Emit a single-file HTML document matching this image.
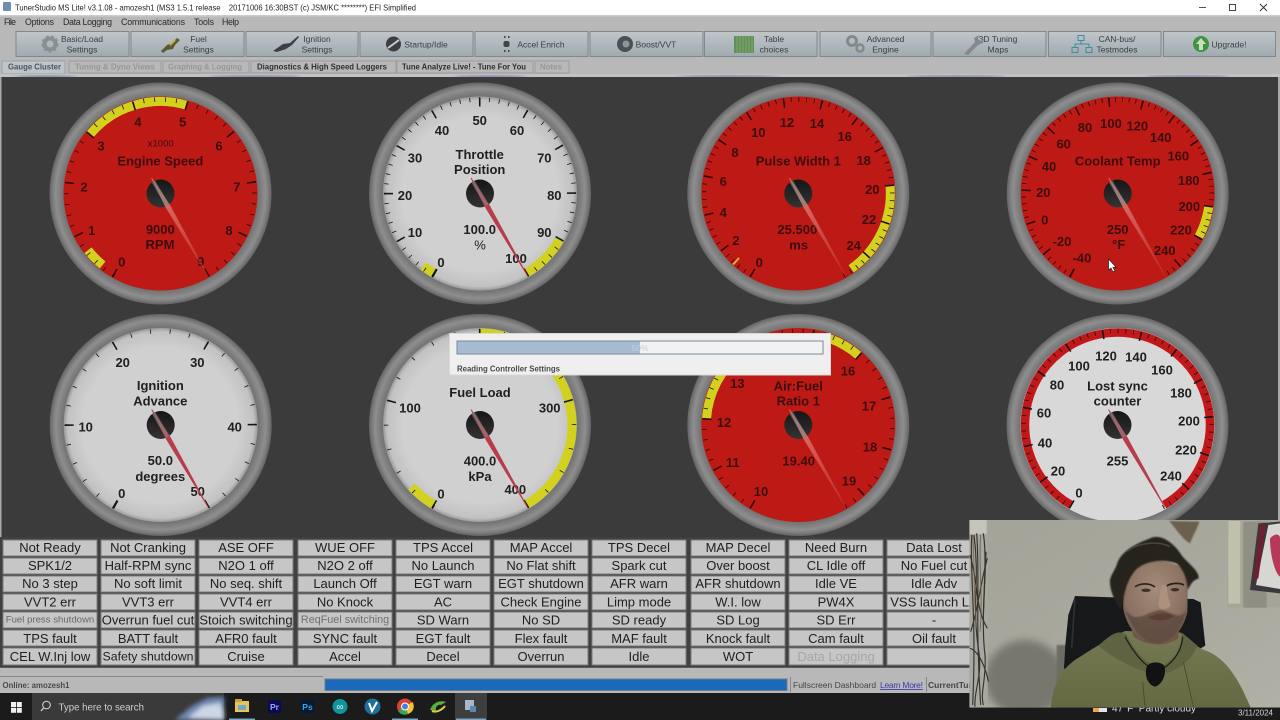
<!DOCTYPE html>
<html><head><meta charset="utf-8"><title>TunerStudio</title>
<style>
html,body{margin:0;padding:0;width:1280px;height:720px;overflow:hidden;background:#3b3b3b}
svg{display:block;font-family:"Liberation Sans",sans-serif}
#root{filter:blur(.35px)}
text{white-space:pre}
.g text{text-anchor:middle;dominant-baseline:central;font-weight:bold;font-size:13px}
.gw text{fill:#202020}.gr text{fill:#3d0d0e}
.A{fill:none;stroke:#d2d21e;stroke-width:9}
.M{fill:none;stroke-width:9}.m{fill:none;stroke-width:4.5}
.gw .M,.gw .m{stroke:#151515}.gr .M,.gr .m{stroke:#2c0808}
.tb text{text-anchor:middle;font-size:8.5px;fill:#3a4045;dominant-baseline:central}
.mn text{font-size:8.8px;fill:#2a2a2a;dominant-baseline:central}
.tab text{font-size:8.4px;font-weight:bold;dominant-baseline:central}
.ct text{text-anchor:middle;dominant-baseline:central;font-size:13px;fill:#202020}
</style></head><body>
<svg id="root" width="1280" height="720" viewBox="0 0 1280 720" xmlns="http://www.w3.org/2000/svg">
<defs>
<radialGradient id="bz" gradientUnits="userSpaceOnUse" cx="0" cy="0" r="111">
<stop offset=".86" stop-color="#6c6c6c"/><stop offset=".9" stop-color="#7c7c7c"/><stop offset=".945" stop-color="#8e8e8e"/><stop offset=".97" stop-color="#7e7e7e"/><stop offset="1" stop-color="#636363"/>
</radialGradient>
<radialGradient id="fw" gradientUnits="userSpaceOnUse" cx="0" cy="0" r="97">
<stop offset=".8" stop-color="#d0d0d0"/><stop offset=".96" stop-color="#c2c2c2"/><stop offset="1" stop-color="#9a9a9a"/>
</radialGradient>
<linearGradient id="hb" x1="0" y1="0" x2="0" y2="1"><stop offset="0" stop-color="#161616"/><stop offset="1" stop-color="#333"/></linearGradient>
<linearGradient id="nd" gradientUnits="userSpaceOnUse" x1="0" y1="0" x2="47" y2="82"><stop offset=".1" stop-color="#e08078" stop-opacity=".8"/><stop offset="1" stop-color="#d86a62" stop-opacity=".2"/></linearGradient>
<clipPath id="sw"><polygon points="0,0 -66,120 -130,120 -130,-130 130,-130 130,120 66,120"/></clipPath>
<g id="bez"><circle r="111" fill="url(#bz)"/></g>
<g id="hubw"><circle r="14" fill="url(#hb)"/><polygon points="-8.65,-15.8 9.67,11.75 47.85,82.1 47.15,82.5 5.33,14.25 -9.35,-15.4" fill="#b93c4a"/><line x1="-7" y1="-12" x2="7" y2="12" stroke="#888" stroke-width="4" opacity=".55"/></g>
<g id="hubr"><circle r="14" fill="url(#hb)"/><polygon points="-8.65,-15.8 9.67,11.75 47.85,82.1 47.15,82.5 5.33,14.25 -9.35,-15.4" fill="url(#nd)"/><line x1="-7" y1="-12" x2="7" y2="12" stroke="#888" stroke-width="4" opacity=".55"/></g>
<g id="row"><rect x="0" y="540" width="94" height="16"/><rect x="0" y="558" width="94" height="16"/><rect x="0" y="576" width="94" height="16"/><rect x="0" y="594" width="94" height="16"/><rect x="0" y="612" width="94" height="16"/><rect x="0" y="630" width="94" height="16"/><rect x="0" y="648" width="94" height="17"/></g>
<linearGradient id="btn" x1="0" y1="0" x2="0" y2="1"><stop offset="0" stop-color="#c0c6c9"/><stop offset="1" stop-color="#9faab0"/></linearGradient>
<filter id="bl"><feGaussianBlur stdDeviation="2"/></filter>
<filter id="bl6"><feGaussianBlur stdDeviation="12"/></filter>
</defs>

<rect width="1280" height="720" fill="#3b3b3b"/>
<!-- title bar -->
<rect width="1280" height="15" fill="#fff"/>
<rect x="3" y="2" width="8" height="9" rx="1" fill="#6f8fb0"/>
<text x="15" y="10.5" font-size="8.6" fill="#222" textLength="401" lengthAdjust="spacingAndGlyphs">TunerStudio MS Lite! v3.1.08 - amozesh1 (MS3 1.5.1 release    20171006 16:30BST (c) JSM/KC ********) EFI Simplified</text>
<line x1="1199" y1="7.5" x2="1206" y2="7.5" stroke="#555"/>
<rect x="1229.5" y="4.5" width="6" height="6" fill="none" stroke="#444"/>
<path d="M1260 4L1267 11M1267 4L1260 11" stroke="#333" fill="none"/>
<!-- menu + toolbar -->
<rect y="15" width="1280" height="60" fill="#b8b8b8"/>
<rect y="15" width="1280" height="1.5" fill="#cccccc"/>
<g class="mn">
<text x="4" y="22" textLength="12">File</text><text x="25" y="22" textLength="29">Options</text><text x="63" y="22" textLength="49">Data Logging</text><text x="121" y="22" textLength="64">Communications</text><text x="194" y="22" textLength="20">Tools</text><text x="222" y="22" textLength="17">Help</text>
</g>
<g fill="url(#btn)" stroke="#7d8990">
<rect x="16" y="31.5" width="113" height="25"/><rect x="131" y="31.5" width="113" height="25"/><rect x="246" y="31.5" width="112" height="25"/><rect x="360" y="31.5" width="113" height="25"/><rect x="475" y="31.5" width="113" height="25"/><rect x="590" y="31.5" width="113" height="25"/><rect x="704.500" y="31.5" width="112.500" height="25"/><rect x="820" y="31.5" width="111" height="25"/><rect x="933" y="31.5" width="113" height="25"/><rect x="1048.500" y="31.5" width="112.500" height="25"/><rect x="1163.500" y="31.5" width="112" height="25"/>
</g>
<g class="tb">
<text x="82" y="39">Basic/Load</text><text x="82" y="49.500">Settings</text>
<text x="198.500" y="39">Fuel</text><text x="198.500" y="49.500">Settings</text>
<text x="317" y="39">Ignition</text><text x="317" y="49.500">Settings</text>
<text x="426" y="44.500">Startup/Idle</text>
<text x="541" y="44.500">Accel Enrich</text>
<text x="656" y="44.500">Boost/VVT</text>
<text x="774" y="39">Table</text><text x="774" y="49.500">choices</text>
<text x="885.500" y="39">Advanced</text><text x="885.500" y="49.500">Engine</text>
<text x="998" y="39">3D Tuning</text><text x="998" y="49.500">Maps</text>
<text x="1117" y="39">CAN-bus/</text><text x="1117" y="49.500">Testmodes</text>
<text x="1229" y="44.500">Upgrade!</text>
</g>
<!-- toolbar icons -->
<circle cx="50" cy="44" r="5.500" fill="none" stroke="#8a8e90" stroke-width="4"/><circle cx="50" cy="44" r="8" fill="none" stroke="#8f9395" stroke-width="1.500" stroke-dasharray="3 2.500"/>
<path d="M161 51L167 45L172 43L177 38L180 40L175 45L173 49L167 50L163 53Z" fill="#5d5a30"/><path d="M170 45L175 40" stroke="#c7b050" stroke-width="2"/>
<path d="M273 51L283 44L290 43L298 36L299 37L292 45L286 49L277 52Z" fill="#3c4044"/>
<circle cx="393.500" cy="44" r="7.500" fill="#3b3f42"/><path d="M388 48L399 40" stroke="#ccc" stroke-width="2"/>
<g fill="#444"><rect x="504" y="36" width="1.500" height="2"/><rect x="508" y="36" width="1.500" height="2"/><rect x="503.500" y="41" width="6" height="6" rx="2"/><rect x="504" y="50" width="1.500" height="2"/><rect x="508" y="50" width="1.500" height="2"/></g>
<circle cx="625" cy="44" r="8" fill="#4a5054"/><circle cx="626" cy="44" r="3.500" fill="#8f979b"/>
<rect x="734" y="36" width="20" height="17" fill="#5f9060"/><path d="M737 36V53M740 36V53M743 36V53M746 36V53M749 36V53M752 36V53" stroke="#84a85a" stroke-width="1"/>
<circle cx="852" cy="41" r="4.500" fill="none" stroke="#85898b" stroke-width="3"/><circle cx="860" cy="48" r="3.500" fill="none" stroke="#85898b" stroke-width="2.500"/>
<path d="M964 54L975 42L974 38L979 35L978 39L981 41L984 38L983 43L978 45L968 55Z" fill="#85898c"/>
<g fill="none" stroke="#3d8ba0"><rect x="1078" y="35.500" width="6" height="5"/><rect x="1072" y="47.500" width="6" height="5"/><rect x="1086" y="47.500" width="6" height="5"/><path d="M1081 40.500V44M1075 47.500V44H1089V47.500"/></g>
<circle cx="1201" cy="44" r="8" fill="#3e9440"/><path d="M1201 38L1206 44H1203V50H1199V44H1196Z" fill="#cfdcc0"/>
<!-- tabs -->
<rect x="2" y="61" width="63" height="13" fill="#bec6ca" stroke="#9aa2a6"/>
<g fill="#b8b8b8" stroke="#9c9c9c"><rect x="69" y="61" width="92" height="12"/><rect x="163" y="61" width="86" height="12"/><rect x="251" y="61" width="145" height="12"/><rect x="397" y="61" width="136" height="12"/><rect x="535" y="61" width="34" height="12"/></g>
<g class="tab">
<text x="8" y="66.500" fill="#47545e" textLength="53" lengthAdjust="spacingAndGlyphs">Gauge Cluster</text>
<text x="75" y="66.500" fill="#979797" textLength="80" lengthAdjust="spacingAndGlyphs">Tuning &amp; Dyno Views</text>
<text x="168" y="66.500" fill="#979797" textLength="74" lengthAdjust="spacingAndGlyphs">Graphing &amp; Logging</text>
<text x="257" y="66.500" fill="#2e2e2e" textLength="130" lengthAdjust="spacingAndGlyphs">Diagnostics &amp; High Speed Loggers</text>
<text x="402" y="66.500" fill="#2e2e2e" textLength="124" lengthAdjust="spacingAndGlyphs">Tune Analyze Live! - Tune For You</text>
<text x="540" y="66.500" fill="#979797" textLength="22" lengthAdjust="spacingAndGlyphs">Notes</text>
</g>
<rect y="74" width="1280" height="3.500" fill="#bfc3c6"/>
<g fill="#3c3c90" opacity=".75" filter="url(#bl)"><ellipse cx="46" cy="76.500" rx="30" ry="1.200"/><ellipse cx="255" cy="76.500" rx="45" ry="1.200"/><ellipse cx="490" cy="76.500" rx="35" ry="1.200"/><ellipse cx="728" cy="76.500" rx="50" ry="1.200"/><ellipse cx="956" cy="76.500" rx="48" ry="1.200"/><ellipse cx="1187" cy="76.500" rx="42" ry="1.200"/></g>
<rect y="77" width="1280" height="461" fill="#3b3b3b"/>
<rect y="77" width="1.500" height="461" fill="#a8a8a8"/><rect x="1278" y="77" width="2" height="461" fill="#a8a8a8"/>

<!-- GAUGE 1 Engine -->
<g class="g gr" transform="translate(160.500,193.500)"><use href="#bez"/><circle r="97" fill="#bd1a16"/>
<circle class="A" r="92" pathLength="360" stroke-dasharray="66.670 999" transform="rotate(-140)"/><circle class="A" r="92" pathLength="360" stroke-dasharray="13 999" transform="rotate(-231)"/>
<g clip-path="url(#sw)"><circle class="m" r="94" pathLength="360" stroke-dasharray=".5 6.167" transform="rotate(119.700)"/><circle class="M" r="91.500" pathLength="360" stroke-dasharray="1 32.333" transform="rotate(119.500)"/></g></g>
<g class="g gr">
<text x="121.700" y="262">0</text><text x="91.700" y="230.700">1</text><text x="84" y="187">2</text><text x="101" y="146">3</text><text x="138" y="122">4</text><text x="182.700" y="122">5</text><text x="219" y="146">6</text><text x="236.700" y="187">7</text><text x="229" y="230.700">8</text><text x="200.700" y="261.700">9</text>
<text x="160.700" y="144" style="font-size:9.500px;font-weight:normal">x1000</text><text x="160.300" y="161">Engine Speed</text><text x="160.300" y="229.300">9000</text><text x="160" y="244.500">RPM</text>
</g>
<use href="#hubr" x="160.500" y="193.500"/>

<!-- GAUGE 2 Throttle -->
<g class="g gw" transform="translate(480,193.500)"><use href="#bez"/><circle r="97" fill="url(#fw)"/>
<circle class="A" r="92" pathLength="360" stroke-dasharray="8 999" transform="rotate(-240)"/><circle class="A" r="92" pathLength="360" stroke-dasharray="30 999" transform="rotate(30)"/>
<g clip-path="url(#sw)"><circle class="m" r="94" pathLength="360" stroke-dasharray=".5 5.500" transform="rotate(119.700)"/><circle class="M" r="91.500" pathLength="360" stroke-dasharray="1 29" transform="rotate(119.500)"/></g></g>
<g class="g gw">
<text x="441" y="262.300">0</text><text x="415" y="232.700">10</text><text x="405" y="195.300">20</text><text x="415" y="158">30</text><text x="442" y="130.700">40</text><text x="479.700" y="120.700">50</text><text x="517" y="130.700">60</text><text x="544.300" y="158">70</text><text x="554.300" y="195.300">80</text><text x="544.300" y="232.700">90</text><text x="516" y="258.300">100</text>
<text x="479.700" y="154.300">Throttle</text><text x="479.700" y="169.300">Position</text><text x="479.700" y="229.300">100.0</text><text x="480" y="245" style="font-weight:normal">%</text>
</g>
<use href="#hubw" x="480" y="193.500"/>

<!-- GAUGE 3 PW -->
<g class="g gr" transform="translate(798.300,193.500)"><use href="#bez"/><circle r="97" fill="#bd1a16"/>
<circle class="A" r="92" pathLength="360" stroke-dasharray="60 999" transform="rotate(-5)"/><circle class="A" r="92" pathLength="360" stroke-dasharray="1.200 999" transform="rotate(-228)" style="stroke:#e8b030"/>
<g clip-path="url(#sw)"><circle class="m" r="94" pathLength="360" stroke-dasharray=".5 4.206" transform="rotate(119.700)"/><circle class="M" r="91.500" pathLength="360" stroke-dasharray="1 22.530" transform="rotate(119.500)"/></g></g>
<g class="g gr">
<text x="759.300" y="262.300">0</text><text x="736" y="240.700">2</text><text x="723.300" y="212.300">4</text><text x="723.300" y="181.700">6</text><text x="735" y="152.300">8</text><text x="758.300" y="132.700">10</text><text x="787" y="122.300">12</text><text x="817" y="123.700">14</text><text x="844.700" y="136.300">16</text><text x="863.700" y="160.700">18</text><text x="872.300" y="189.700">20</text><text x="869" y="219.700">22</text><text x="853.700" y="245.700">24</text>
<text x="798.300" y="161">Pulse Width 1</text><text x="797.300" y="229.300">25.500</text><text x="798.700" y="245">ms</text>
</g>
<use href="#hubr" x="798.300" y="193.500"/>

<!-- GAUGE 4 Coolant -->
<g class="g gr" transform="translate(1117.700,193.500)"><use href="#bez"/><circle r="97" fill="#bd1a16"/>
<circle class="A" r="92" pathLength="360" stroke-dasharray="20 999" transform="rotate(8)"/>
<g clip-path="url(#sw)"><circle class="m" r="94" pathLength="360" stroke-dasharray=".5 3.638" transform="rotate(119.700)"/><circle class="M" r="91.500" pathLength="360" stroke-dasharray="1 19.690" transform="rotate(119.500)"/></g></g>
<g class="g gr">
<text x="1082" y="258">-40</text><text x="1062" y="241.700">-20</text><text x="1044.700" y="220">0</text><text x="1043.300" y="192.700">20</text><text x="1049" y="166.700">40</text><text x="1063.700" y="144">60</text><text x="1085" y="127.700">80</text><text x="1111" y="123.300">100</text><text x="1137.300" y="126">120</text><text x="1160.700" y="137.300">140</text><text x="1178.300" y="156">160</text><text x="1188.700" y="180.300">180</text><text x="1189.300" y="206.300">200</text><text x="1181" y="230">220</text><text x="1164.700" y="250.700">240</text>
<text x="1117.700" y="161">Coolant Temp</text><text x="1117.700" y="229.300">250</text><text x="1118.700" y="244.700">°F</text>
</g>
<use href="#hubr" x="1117.700" y="193.500"/>
<path d="M1108.500 259V270L1111 268L1113 272L1115 271L1113 267.500L1116 267Z" fill="#fff" stroke="#222" stroke-width=".7"/>

<!-- GAUGE 5 Ignition -->
<g class="g gw" transform="translate(160.700,425)"><use href="#bez"/><circle r="97" fill="url(#fw)"/>
<g clip-path="url(#sw)"><circle class="m" r="94" pathLength="360" stroke-dasharray=".5 11.500" transform="rotate(119.700)"/><circle class="M" r="91.500" pathLength="360" stroke-dasharray="1 59" transform="rotate(119.500)"/></g></g>
<g class="g gw">
<text x="121.700" y="493.700">0</text><text x="85.700" y="427">10</text><text x="122.700" y="362.300">20</text><text x="197.300" y="362.300">30</text><text x="234.700" y="427">40</text><text x="197.700" y="491.700">50</text>
<text x="160.300" y="385.700">Ignition</text><text x="160.300" y="401">Advance</text><text x="160.300" y="460.700">50.0</text><text x="160.300" y="476.300">degrees</text>
</g>
<use href="#hubw" x="160.700" y="425"/>

<!-- GAUGE 6 Fuel load -->
<g class="g gw" transform="translate(480,425)"><use href="#bez"/><circle r="97" fill="url(#fw)"/>
<circle class="A" r="92" pathLength="360" stroke-dasharray="150 999" transform="rotate(-90)"/><circle class="A" r="92" pathLength="360" stroke-dasharray="18 999" transform="rotate(-240)"/>
<g clip-path="url(#sw)"><circle class="m" r="94" pathLength="360" stroke-dasharray=".5 14.500" transform="rotate(119.700)"/><circle class="M" r="91.500" pathLength="360" stroke-dasharray="1 74" transform="rotate(119.500)"/></g></g>
<g class="g gw">
<text x="441" y="494">0</text><text x="410" y="408">100</text><text x="549.700" y="408">300</text><text x="515.300" y="489.700">400</text>
<text x="480" y="392.300">Fuel Load</text><text x="480" y="461">400.0</text><text x="480" y="476.500">kPa</text>
</g>
<use href="#hubw" x="480" y="425"/>

<!-- GAUGE 7 AFR -->
<g class="g gr" transform="translate(798.300,425)"><use href="#bez"/><circle r="97" fill="#bd1a16"/>
<circle class="A" r="92" pathLength="360" stroke-dasharray="46 999" transform="rotate(-176)"/><circle class="A" r="92" pathLength="360" stroke-dasharray="21 999" transform="rotate(-70)"/>
<g clip-path="url(#sw)"><circle class="m" r="94" pathLength="360" stroke-dasharray=".5 5.883" transform="rotate(119.700)"/><circle class="M" r="91.500" pathLength="360" stroke-dasharray="1 30.910" transform="rotate(119.500)"/></g></g>
<g class="g gr">
<text x="761" y="491.300">10</text><text x="732.700" y="462.700">11</text><text x="724" y="422.700">12</text><text x="737.300" y="383.700">13</text><text x="848" y="371">16</text><text x="869" y="406">17</text><text x="870" y="447">18</text><text x="849" y="481">19</text>
<text x="798.300" y="386">Air:Fuel</text><text x="798.300" y="401">Ratio 1</text><text x="798.700" y="461">19.40</text>
</g>
<use href="#hubr" x="798.300" y="425"/>

<!-- GAUGE 8 Lost sync -->
<g class="g gw" transform="translate(1117.500,425)"><use href="#bez"/><circle r="97" fill="#d8d8d8"/>
<circle r="92.500" fill="none" stroke="#c2181a" stroke-width="8.500" pathLength="360" stroke-dasharray="300 999" transform="rotate(120)"/>
<g clip-path="url(#sw)"><circle class="m" r="94" pathLength="360" stroke-dasharray=".5 4.206" transform="rotate(119.700)"/><circle class="M" r="91.500" pathLength="360" stroke-dasharray="1 22.530" transform="rotate(119.500)"/></g></g>
<g class="g gw">
<text x="1079" y="493">0</text><text x="1058" y="471">20</text><text x="1045" y="443">40</text><text x="1044" y="413">60</text><text x="1057" y="385">80</text><text x="1079" y="366">100</text><text x="1106" y="356">120</text><text x="1136" y="357">140</text><text x="1162" y="370">160</text><text x="1181" y="393">180</text><text x="1189" y="421">200</text><text x="1186" y="450">220</text><text x="1171" y="476">240</text>
<text x="1117.500" y="386">Lost sync</text><text x="1117.500" y="401">counter</text><text x="1117.500" y="461">255</text>
</g>
<use href="#hubw" x="1117.500" y="425"/>

<!-- dialog -->
<rect x="449.500" y="333.500" width="381" height="41.500" fill="#efefef" stroke="#d8d8d8"/>
<rect x="457" y="341" width="366" height="13" fill="#f2f2f2" stroke="#7a8a98"/>
<rect x="457.500" y="341.500" width="182.500" height="12" fill="#a5bbd1"/>
<text x="640" y="351" font-size="8.500" text-anchor="middle" fill="#c4d0dc">50%</text>
<text x="457" y="371.500" font-size="8.300" font-weight="bold" fill="#4a4a4a" textLength="103" lengthAdjust="spacingAndGlyphs">Reading Controller Settings</text>

<!-- indicators -->
<rect y="537" width="975" height="130" fill="#404040"/>
<g fill="#c6c6c6" stroke="#7c7c7c" stroke-width="1"><use href="#row" x="3"/><use href="#row" x="101"/><use href="#row" x="199"/><use href="#row" x="298"/><use href="#row" x="396"/><use href="#row" x="494"/><use href="#row" x="592"/><use href="#row" x="691"/><use href="#row" x="789"/><use href="#row" x="887"/></g>
<g class="ct">
<g transform="translate(0,547.500)"><text x="50">Not Ready</text><text x="148">Not Cranking</text><text x="246">ASE OFF</text><text x="345">WUE OFF</text><text x="443">TPS Accel</text><text x="541">MAP Accel</text><text x="639">TPS Decel</text><text x="738">MAP Decel</text><text x="836">Need Burn</text><text x="934">Data Lost</text></g>
<g transform="translate(0,565.500)"><text x="50">SPK1/2</text><text x="148">Half-RPM sync</text><text x="246">N2O 1 off</text><text x="345">N2O 2 off</text><text x="443">No Launch</text><text x="541">No Flat shift</text><text x="639">Spark cut</text><text x="738">Over boost</text><text x="836">CL Idle off</text><text x="934">No Fuel cut</text></g>
<g transform="translate(0,583.500)"><text x="50">No 3 step</text><text x="148">No soft limit</text><text x="246">No seq. shift</text><text x="345">Launch Off</text><text x="443">EGT warn</text><text x="541">EGT shutdown</text><text x="639">AFR warn</text><text x="738">AFR shutdown</text><text x="836">Idle VE</text><text x="934">Idle Adv</text></g>
<g transform="translate(0,602)"><text x="50">VVT2 err</text><text x="148">VVT3 err</text><text x="246">VVT4 err</text><text x="345">No Knock</text><text x="443">AC</text><text x="541">Check Engine</text><text x="639">Limp mode</text><text x="738">W.I. low</text><text x="836">PW4X</text><text x="934">VSS launch LA</text></g>
<g transform="translate(0,620)"><text x="50" style="font-size:9.600px;fill:#666">Fuel press shutdown</text><text x="148">Overrun fuel cut</text><text x="246">Stoich switching</text><text x="345" style="font-size:10.800px;fill:#707070">ReqFuel switching</text><text x="443">SD Warn</text><text x="541">No SD</text><text x="639">SD ready</text><text x="738">SD Log</text><text x="836">SD Err</text><text x="934">-</text></g>
<g transform="translate(0,638.500)"><text x="50">TPS fault</text><text x="148">BATT fault</text><text x="246">AFR0 fault</text><text x="345">SYNC fault</text><text x="443">EGT fault</text><text x="541">Flex fault</text><text x="639">MAF fault</text><text x="738">Knock fault</text><text x="836">Cam fault</text><text x="934">Oil fault</text></g>
<g transform="translate(0,656.500)"><text x="50">CEL W.Inj low</text><text x="148" style="font-size:12.300px">Safety shutdown</text><text x="246">Cruise</text><text x="345">Accel</text><text x="443">Decel</text><text x="541">Overrun</text><text x="639">Idle</text><text x="738">WOT</text><text x="836" style="fill:#a6a6a6">Data Logging</text></g>
</g>

<!-- status -->
<rect y="667" width="1280" height="26" fill="#b8b8b8"/>
<rect y="667" width="1280" height="1" fill="#5a5a5a"/>
<rect y="676" width="323" height="1" fill="#8a8a8a"/>
<text x="2.500" y="688" font-size="8.300" font-weight="bold" fill="#4a4a4a" textLength="67" lengthAdjust="spacingAndGlyphs">Online: amozesh1</text>
<rect x="325" y="679" width="462" height="11.500" fill="#1c68bb" stroke="#6d7d88"/>
<rect x="790" y="677" width="1" height="15" fill="#888"/>
<text x="793" y="688" font-size="8.500" fill="#444">Fullscreen Dashboard</text>
<text x="880" y="688" font-size="8.500" fill="#3a3ab0" text-decoration="underline" textLength="43">Learn More!</text>
<rect x="926" y="677" width="1" height="15" fill="#888"/>
<text x="928" y="688" font-size="8.500" font-weight="bold" fill="#444">CurrentTune</text>

<!-- taskbar -->
<rect y="693" width="1280" height="27" fill="#1b1b1b"/>
<g fill="#f0f0f0"><rect x="11" y="702" width="5" height="5"/><rect x="16.800" y="702" width="5" height="5"/><rect x="11" y="707.800" width="5" height="5"/><rect x="16.800" y="707.800" width="5" height="5"/></g>
<rect x="32" y="693" width="192" height="27" fill="#3a3a3a"/>
<g filter="url(#bl)"><path d="M175 720L192 706L208 698L224 697V720Z" fill="#6f8ab8"/><path d="M188 718L203 706L220 703L224 712V720Z" fill="#cdd6e6"/></g>
<circle cx="46.500" cy="705" r="3.800" fill="none" stroke="#ddd"/><path d="M43.500 708L41 711" stroke="#ddd" stroke-width="1.200"/>
<text x="58.500" y="710.500" font-size="10" fill="#cfcfcf" textLength="85.500" lengthAdjust="spacingAndGlyphs">Type here to search</text>
<rect x="455" y="693" width="32" height="27" fill="#3e3e3e"/>
<rect x="235" y="701" width="14" height="11" fill="#e8c35a"/><rect x="235" y="699" width="7" height="3" fill="#c9a03c"/><rect x="238" y="705" width="8" height="5" fill="#6fa8c8"/>
<rect x="268" y="700" width="13" height="13" rx="2" fill="#0b0b55"/><text x="274.500" y="710" font-size="8.500" font-weight="bold" fill="#a3a3ff" text-anchor="middle">Pr</text>
<rect x="301" y="700" width="13" height="13" rx="2" fill="#051a33"/><text x="307.500" y="710" font-size="8.500" font-weight="bold" fill="#3aa6f0" text-anchor="middle">Ps</text>
<circle cx="340" cy="706.500" r="7.500" fill="#10969c"/><text x="340" y="710" font-size="10" fill="#eaf8f8" text-anchor="middle">∞</text>
<circle cx="372.500" cy="706.500" r="8" fill="#1f6e9e"/><path d="M369 703L372 711L377 702" stroke="#fff" stroke-width="2" fill="none"/>
<circle cx="405" cy="706.500" r="8" fill="#d8402f"/><path d="M405 706.500L398 711A8 8 0 0 0 408 714Z" fill="#3aa655"/><path d="M405 706.500L408 714A8 8 0 0 0 412.500 702Z" fill="#f2c230"/><circle cx="405" cy="706.500" r="3.500" fill="#3f82e0" stroke="#fff"/>
<path d="M430 710C433 702 440 700 446 702L441 705C438 704 435 707 436 711Z" fill="#58b040"/><path d="M432 711C436 713 442 710 445 706" stroke="#e0d040" stroke-width="2" fill="none"/>
<rect x="465" y="700" width="9" height="10" fill="#a8b8c8"/><rect x="470" y="706" width="6" height="6" fill="#5c88b0"/>
<rect x="229" y="718.500" width="26" height="1.500" fill="#7aa6c8"/><rect x="392" y="718.500" width="26" height="1.500" fill="#7aa6c8"/><rect x="456" y="718.500" width="30" height="1.500" fill="#7aa6c8"/>
<rect x="1093" y="708" width="14" height="4" fill="#e9a84a"/><rect x="1099" y="708" width="8" height="4" fill="#dfe6ee"/>
<text x="1112" y="711.500" font-size="10" fill="#ddd">47°F  Partly cloudy</text>
<text x="1238" y="715.500" font-size="8" fill="#d8d8d8" textLength="35">3/11/2024</text>

<!-- webcam -->
<svg x="960" y="515" width="320" height="205" viewBox="0 0 960 615">
<clipPath id="wc"><rect x="28" y="15" width="932" height="563"/></clipPath>
<linearGradient id="wall" x1="0" y1="0" x2="1" y2="1"><stop offset="0" stop-color="#a3a398"/><stop offset=".6" stop-color="#a9a99e"/><stop offset="1" stop-color="#b1b0a6"/></linearGradient>
<radialGradient id="fc" cx=".5" cy=".35" r=".75"><stop offset="0" stop-color="#a48a78"/><stop offset=".6" stop-color="#8c7262"/><stop offset="1" stop-color="#5a493e"/></radialGradient>
<linearGradient id="hd" x1="0" y1="0" x2="0" y2="1"><stop offset="0" stop-color="#767a52"/><stop offset="1" stop-color="#656942"/></linearGradient>
<g clip-path="url(#wc)">
<rect x="28" y="15" width="932" height="563" fill="url(#wall)"/>
<ellipse cx="195" cy="490" rx="120" ry="115" fill="#77776d" filter="url(#bl6)"/>
<rect x="290" y="390" width="50" height="180" fill="#6d6d64" filter="url(#bl)"/>
<!-- left hanging -->
<rect x="28" y="15" width="55" height="563" fill="#a8a8a0"/>
<rect x="28" y="15" width="52" height="42" fill="#c4c4ba"/>
<g stroke="#2b2622" stroke-width="3.500" fill="none" opacity=".9">
<path d="M35 60C30 200 50 300 38 570"/><path d="M50 55C60 180 45 320 62 570"/><path d="M70 55C85 150 60 300 75 420C80 490 60 530 70 570"/><path d="M42 60C60 200 35 260 55 400C70 480 40 530 45 575"/>
<path d="M30 400C60 410 80 470 85 500"/><path d="M78 110L70 300"/><path d="M30 120C55 200 45 280 82 340"/><path d="M82 130C60 210 55 280 32 350"/>
</g>
<g stroke="#6f5a46" stroke-width="3" fill="none" opacity=".8"><path d="M38 60C45 150 40 250 50 340"/><path d="M62 60C55 150 70 250 60 350"/></g>
<!-- right panel & poster -->
<rect x="802" y="15" width="158" height="262" fill="#a5a598"/>
<rect x="805" y="18" width="36" height="248" fill="#c0c0ad"/>
<rect x="850" y="20" width="70" height="258" fill="#8f8f84"/>
<path d="M870 225L895 25L960 20V235Z" fill="#3a383a"/>
<path d="M888 210L925 30L960 25V222Z" fill="#d6d6d2"/>
<path d="M930 70C950 50 960 60 960 70V185C945 175 930 120 930 70Z" fill="#b83858"/>
<path d="M880 195L900 30L918 25L895 190Z" fill="#6e2030"/>
<path d="M628 18C650 45 670 75 690 85C700 60 712 40 718 20Z" fill="#6c5f4d" filter="url(#bl)"/>
<!-- chair -->
<path d="M345 243L480 248L700 252L722 262L736 392L600 470L330 470L312 460L316 390L325 300Z" fill="#17181a"/>
<path d="M345 250L335 400" stroke="#2e2f32" stroke-width="5"/>
<!-- hoodie -->
<path d="M272 578C278 520 295 470 345 435C385 410 420 385 495 348L660 352C690 375 705 395 745 410C800 435 835 490 872 578Z" fill="url(#hd)"/>
<path d="M415 392C460 350 480 345 500 360C530 420 570 460 610 450C650 430 665 390 665 352L712 392C690 450 640 470 600 480C530 470 460 430 415 392Z" fill="#5f6342"/>
<path d="M495 365C520 410 550 450 580 462M668 365C665 410 640 440 610 460" stroke="#1c1c18" stroke-width="3.500" fill="none"/>
<path d="M670 440L700 575M548 500L555 575" stroke="#44482e" stroke-width="2.500" fill="none"/>
<path d="M560 455C570 438 605 438 614 455C620 480 605 510 585 515C565 510 552 485 560 455Z" fill="#121212"/>
<!-- neck/face -->
<path d="M505 300L660 300L655 370C620 395 560 395 520 365Z" fill="#6f5849"/>
<path d="M488 170C530 125 640 125 684 175L682 290C670 350 630 385 590 385C540 385 500 340 490 280Z" fill="url(#fc)"/>
<path d="M495 285C515 340 550 385 590 385C635 385 670 340 678 285C660 320 640 290 600 285C560 290 530 330 495 285Z" fill="#5e4c41" opacity=".85" filter="url(#bl)"/>
<path d="M525 215C545 203 570 205 585 216M620 213C635 203 660 203 672 210" stroke="#2a211c" stroke-width="5" fill="none"/>
<ellipse cx="558" cy="226" rx="14" ry="5" fill="#3e3029"/><ellipse cx="645" cy="224" rx="13" ry="5" fill="#3e3029"/>
<path d="M605 210C600 240 590 268 600 280C615 285 625 280 632 272C625 250 620 230 620 212Z" fill="#ad917d"/>
<path d="M565 308C590 292 625 292 642 304C620 318 585 320 565 308Z" fill="#5a3f36"/>
<!-- hair -->
<path d="M450 195C455 175 465 165 470 150C480 110 530 85 570 70C600 55 640 80 668 125C690 150 718 170 716 190C700 195 692 205 684 225C680 190 672 165 650 145C610 132 565 135 532 160C510 180 496 215 490 255L482 285C465 260 448 225 450 195Z" fill="#26211e" filter="url(#bl)"/>
<path d="M500 110C530 85 590 75 630 95" stroke="#4b433d" stroke-width="5" fill="none"/>
</g>
</svg>
</svg>
</body></html>
